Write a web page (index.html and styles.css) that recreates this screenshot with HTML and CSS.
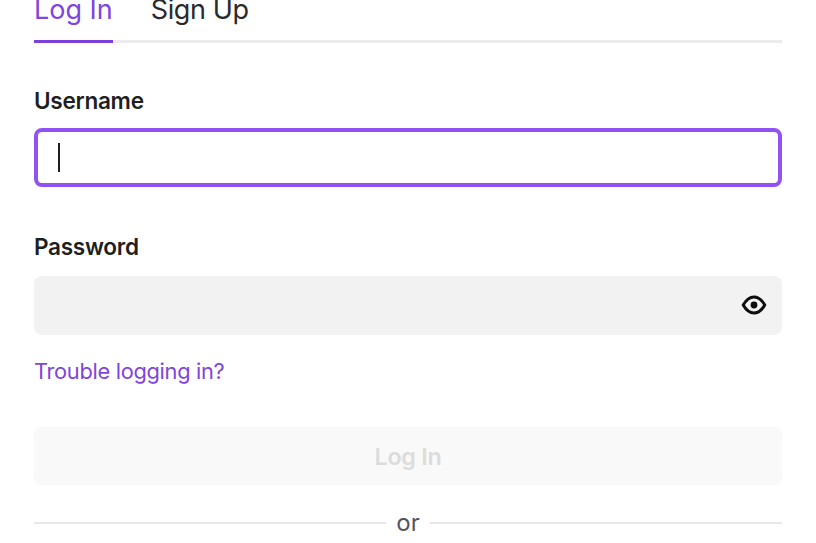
FILE: index.html
```html
<!DOCTYPE html>
<html lang="en">
<head>
<meta charset="utf-8">
<title>Log In</title>
<link rel="stylesheet" href="styles.css">
</head>
<body>
<main class="form">
  <nav class="tabs">
    <a class="tab tab-active">Log In</a>
    <a class="tab">Sign Up</a>
  </nav>
  <label class="label label-user">Username</label>
  <div class="input input-focus"><span class="caret"></span></div>
  <label class="label label-pass">Password</label>
  <div class="input input-pass">
    <svg class="eye" viewBox="0 0 26 22" fill="none" stroke="#0e0e10" stroke-width="3">
      <path d="M2.200 11 C5.500 5.300 9 3 13 3 S20.500 5.300 23.800 11 C20.500 16.700 17 19 13 19 S5.500 16.700 2.200 11 Z" stroke-linejoin="round"/>
      <circle cx="13" cy="11" r="3.400" fill="#0e0e10" stroke="none"/>
    </svg>
  </div>
  <a class="trouble">Trouble logging in?</a>
  <button class="submit" disabled>Log In</button>
  <div class="divider"><span class="rule"></span><span class="or">or</span><span class="rule"></span></div>
</main>
</body>
</html>
```
FILE: styles.css
```css
html, body { margin: 0; padding: 0; background: #fff; height: 100%; overflow: hidden; }
body { font-family: "Inter", "Noto Sans", sans-serif; color: #1f1f23; }
.form { padding: 0 34px; display: flex; flex-direction: column; }
.tabs { display: flex; gap: 38px; height: 43px; box-sizing: border-box; border-bottom: 3px solid #ececee; }
.tab { font-size: 27px; line-height: 20px; height: 43px; box-sizing: border-box; color: #2a2a2e; font-weight: 400; letter-spacing: -0.4px; }
.tab-active { color: #8045dd; border-bottom: 3px solid #7d3fdc; letter-spacing: 0; }
.label { font-size: 22.6px; font-weight: 600; line-height: 26px; color: #1f1f23; letter-spacing: -0.3px; }
.label-user { margin-top: 45px; margin-bottom: 14px; }
.label-pass { margin-top: 47px; margin-bottom: 16px; }
.input { height: 59px; box-sizing: border-box; border-radius: 8px; display: flex; align-items: center; }
.input-focus { border: 4px solid #9052f2; padding-left: 20px; background: #fff; }
.caret { width: 2px; height: 29px; background: #1f1f23; }
.input-pass { background: #f2f2f2; justify-content: flex-end; padding: 0 15px 1px 0; }
.eye { display: block; width: 26px; height: 22px; }
.trouble { margin-top: 23px; font-size: 21.8px; line-height: 26px; color: #7f45d9; letter-spacing: -0.3px; }
.submit { margin-top: 43px; height: 58px; border: 0; border-radius: 8px; background: #f9f9f9; color: #dcdcdc; font-family: inherit; font-size: 23.4px; font-weight: 600; letter-spacing: -0.3px; }
.divider { display: flex; align-items: center; gap: 10px; margin-top: 25px; height: 26px; }
.rule { flex: 1; height: 2px; background: #e8e8e8; }
.or { font-size: 24px; line-height: 28px; color: #53535f; }
```
